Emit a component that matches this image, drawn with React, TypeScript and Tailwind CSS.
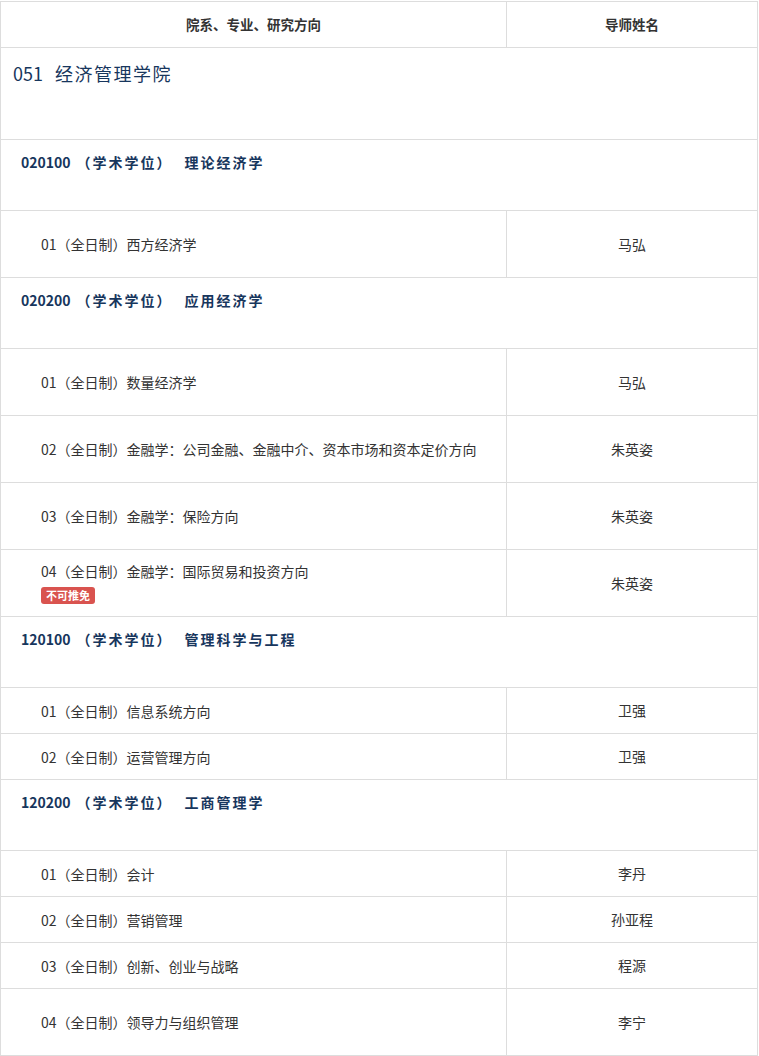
import React from "react";

type Row =
  | { kind: "major"; code: string; name: string }
  | { kind: "dir"; text: string; teacher: string; h: number; badge?: string };

const rows: Row[] = [
  { kind: "major", code: "020100", name: "理论经济学" },
  { kind: "dir", text: "01（全日制）西方经济学", teacher: "马弘", h: 67 },
  { kind: "major", code: "020200", name: "应用经济学" },
  { kind: "dir", text: "01（全日制）数量经济学", teacher: "马弘", h: 67 },
  {
    kind: "dir",
    text: "02（全日制）金融学：公司金融、金融中介、资本市场和资本定价方向",
    teacher: "朱英姿",
    h: 67,
  },
  { kind: "dir", text: "03（全日制）金融学：保险方向", teacher: "朱英姿", h: 67 },
  {
    kind: "dir",
    text: "04（全日制）金融学：国际贸易和投资方向",
    teacher: "朱英姿",
    h: 67,
    badge: "不可推免",
  },
  { kind: "major", code: "120100", name: "管理科学与工程" },
  { kind: "dir", text: "01（全日制）信息系统方向", teacher: "卫强", h: 46 },
  { kind: "dir", text: "02（全日制）运营管理方向", teacher: "卫强", h: 46 },
  { kind: "major", code: "120200", name: "工商管理学" },
  { kind: "dir", text: "01（全日制）会计", teacher: "李丹", h: 46 },
  { kind: "dir", text: "02（全日制）营销管理", teacher: "孙亚程", h: 46 },
  { kind: "dir", text: "03（全日制）创新、创业与战略", teacher: "程源", h: 46 },
  { kind: "dir", text: "04（全日制）领导力与组织管理", teacher: "李宁", h: 67 },
];

const font = "font-['Noto_Sans_CJK_SC',_'Liberation_Sans',_sans-serif]";

export default function App() {
  return (
    <div className={`bg-white w-[759px] min-h-[1056px] pt-px ${font}`}>
      <table className="w-[758px] border-collapse table-fixed text-[14px] text-[#333]">
        <colgroup>
          <col className="w-[506px]" />
          <col />
        </colgroup>
        <thead>
          <tr className="h-[46px]">
            <th className="border border-[#dddddd] font-bold text-[13.5px] text-[#333] text-center align-middle">
              院系、专业、研究方向
            </th>
            <th className="border border-[#dddddd] font-bold text-[13.5px] text-[#333] text-center align-middle">
              导师姓名
            </th>
          </tr>
        </thead>
        <tbody>
          <tr className="h-[92px]">
            <td
              colSpan={2}
              className="border border-[#dddddd] align-top pt-[12px] pl-[12px] text-[18px] leading-[26px] text-[#17365d]"
            >
              <span>051</span>
              <span className="ml-[12px] tracking-[1.5px]">经济管理学院</span>
            </td>
          </tr>
          {rows.map((r, i) =>
            r.kind === "major" ? (
              <tr key={i} className="h-[71px]">
                <td
                  colSpan={2}
                  className="border border-[#dddddd] align-top pt-[11px] pl-[20px] font-bold text-[14px] leading-[22px] text-[#17365d]"
                >
                  <span>{r.code}</span>
                  <span className="ml-[6px] tracking-[2px]">（学术学位）</span>
                  <span className="ml-[12px] tracking-[2px]">{r.name}</span>
                </td>
              </tr>
            ) : (
              <tr key={i} style={{ height: r.h }}>
                <td className="border border-[#dddddd] align-middle pl-[40px]">
                  <div className="leading-[20px]">{r.text}</div>
                  {r.badge && (
                    <div className="mt-[3px]">
                      <span className="inline-block bg-[#d9534f] text-white font-bold text-[11px] leading-[17px] px-[5px] rounded-[3px]">
                        {r.badge}
                      </span>
                    </div>
                  )}
                </td>
                <td className="border border-[#dddddd] align-middle text-center">
                  {r.teacher}
                </td>
              </tr>
            )
          )}
        </tbody>
      </table>
    </div>
  );
}
